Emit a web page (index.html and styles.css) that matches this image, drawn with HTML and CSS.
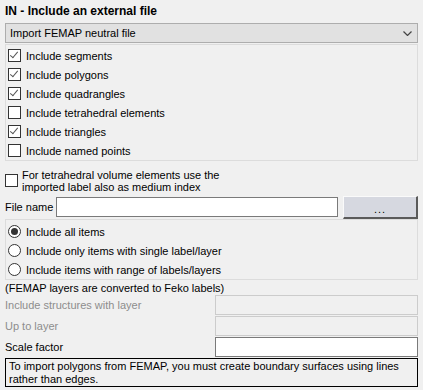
FILE: index.html
```html
<!DOCTYPE html>
<html lang="en">
<head>
    <meta charset="UTF-8">
    <title>IN - Include an external file</title>
    <link rel="stylesheet" href="styles.css">
</head>
<body>
    <div class="panel">
        <div class="title">IN - Include an external file</div>

        <!-- tipo de fichero -->
        <div class="combo">
            <span>Import FEMAP neutral file</span>
            <svg class="chevron" width="9" height="5" viewBox="0 0 9 5"><polyline points="0.5,0.5 4.5,4.5 8.5,0.5" fill="none" stroke="#444" stroke-width="1.2"/></svg>
        </div>

        <div class="group checks">
            <label class="row"><span class="box on"></span>Include segments</label>
            <label class="row"><span class="box on"></span>Include polygons</label>
            <label class="row"><span class="box on"></span>Include quadrangles</label>
            <label class="row"><span class="box"></span>Include tetrahedral elements</label>
            <label class="row"><span class="box on"></span>Include triangles</label>
            <label class="row"><span class="box"></span>Include named points</label>
        </div>

        <label class="tetra">
            <span class="box"></span>
            <span>For tetrahedral volume elements use the<br>imported label also as medium index</span>
        </label>

        <div class="file-row">
            <span class="file-label">File name</span>
            <div class="input"></div>
            <div class="btn">...</div>
        </div>

        <div class="group radios">
            <label class="row"><span class="radio on"></span>Include all items</label>
            <label class="row"><span class="radio"></span>Include only items with single label/layer</label>
            <label class="row"><span class="radio"></span>Include items with range of labels/layers</label>
        </div>

        <div class="note">(FEMAP layers are converted to Feko labels)</div>

        <div class="field disabled">
            <span>Include structures with layer</span>
            <div class="input"></div>
        </div>
        <div class="field disabled">
            <span>Up to layer</span>
            <div class="input"></div>
        </div>
        <div class="field">
            <span>Scale factor</span>
            <div class="input"></div>
        </div>

        <div class="info">To import polygons from FEMAP, you must create boundary surfaces using lines<br>rather than edges.</div>
    </div>
</body>
</html>
```

FILE: styles.css
```css
html, body {
    margin: 0;
    padding: 0;
    background: #f0f0f0;
    font-family: "Liberation Sans", Arial, sans-serif;
    font-size: 11px;
    color: #000;
}

.panel {
    padding: 0 5px;
}

.title {
    height: 23px;
    line-height: 22px;
    font-size: 12px;
    font-weight: bold;
}

.combo {
    height: 20px;
    box-sizing: border-box;
    border: 1px solid #adadad;
    background: #e1e1e1;
    display: flex;
    align-items: center;
    justify-content: space-between;
    padding: 0 5px 0 4px;
}

.chevron {
    margin-top: 1px;
}

.group {
    border: 1px solid #dcdcdc;
    margin-top: 1px;
}

.checks {
    padding-top: 1px;
}

.row {
    height: 19px;
    display: flex;
    align-items: center;
    padding-left: 2px;
}

.box {
    width: 13px;
    height: 13px;
    box-sizing: border-box;
    border: 1px solid #333;
    background: #fff;
    margin-right: 5px;
    flex: none;
    position: relative;
}

.box.on::after {
    content: "";
    position: absolute;
    left: 3px;
    top: 0px;
    width: 3px;
    height: 7px;
    border: solid #555;
    border-width: 0 1px 1px 0;
    transform: rotate(40deg);
}

.tetra {
    display: flex;
    align-items: center;
    margin-top: 7px;
    height: 26px;
    line-height: 12px;
}

.tetra .box {
    margin-right: 4px;
    margin-top: -2px;
}

.file-row {
    display: flex;
    align-items: center;
    height: 24px;
    margin-top: 1px;
}

.file-label {
    width: 51px;
    flex: none;
}

.input {
    height: 20px;
    box-sizing: border-box;
    border: 1px solid #7a7a7a;
    background: #fff;
}

.file-row .input {
    width: 282px;
    flex: none;
}

.btn {
    width: 75px;
    height: 23px;
    box-sizing: border-box;
    margin-left: 5px;
    background: #d6d8e0;
    border-top: 1px solid #fafafa;
    border-left: 1px solid #fafafa;
    border-right: 2px solid #5a5a5a;
    border-bottom: 2px solid #5a5a5a;
    text-align: center;
    line-height: 24px;
    letter-spacing: 1px;
}

.radios {
    padding-top: 2px;
    margin-top: 0;
}

.radio {
    width: 13px;
    height: 13px;
    box-sizing: border-box;
    border: 1px solid #333;
    border-radius: 50%;
    background: #fff;
    margin-right: 5px;
    flex: none;
    display: flex;
    align-items: center;
    justify-content: center;
}

.radio.on::after {
    content: "";
    width: 7px;
    height: 7px;
    border-radius: 50%;
    background: #333;
}

.note {
    height: 16px;
    line-height: 17px;
}

.field {
    display: flex;
    align-items: center;
    justify-content: space-between;
    margin-top: 1px;
}

.field .input {
    width: 203px;
}

.field.disabled span {
    color: #8d8d8d;
}

.field.disabled .input {
    background: #f0f0f0;
    border-color: #cccccc;
}

.note + .field {
    margin-top: -1px;
}

.info {
    margin-top: 1px;
    border: 1px solid #000;
    height: 29px;
    box-sizing: border-box;
    padding: 1px 0 0 3px;
    line-height: 13px;
}
```
